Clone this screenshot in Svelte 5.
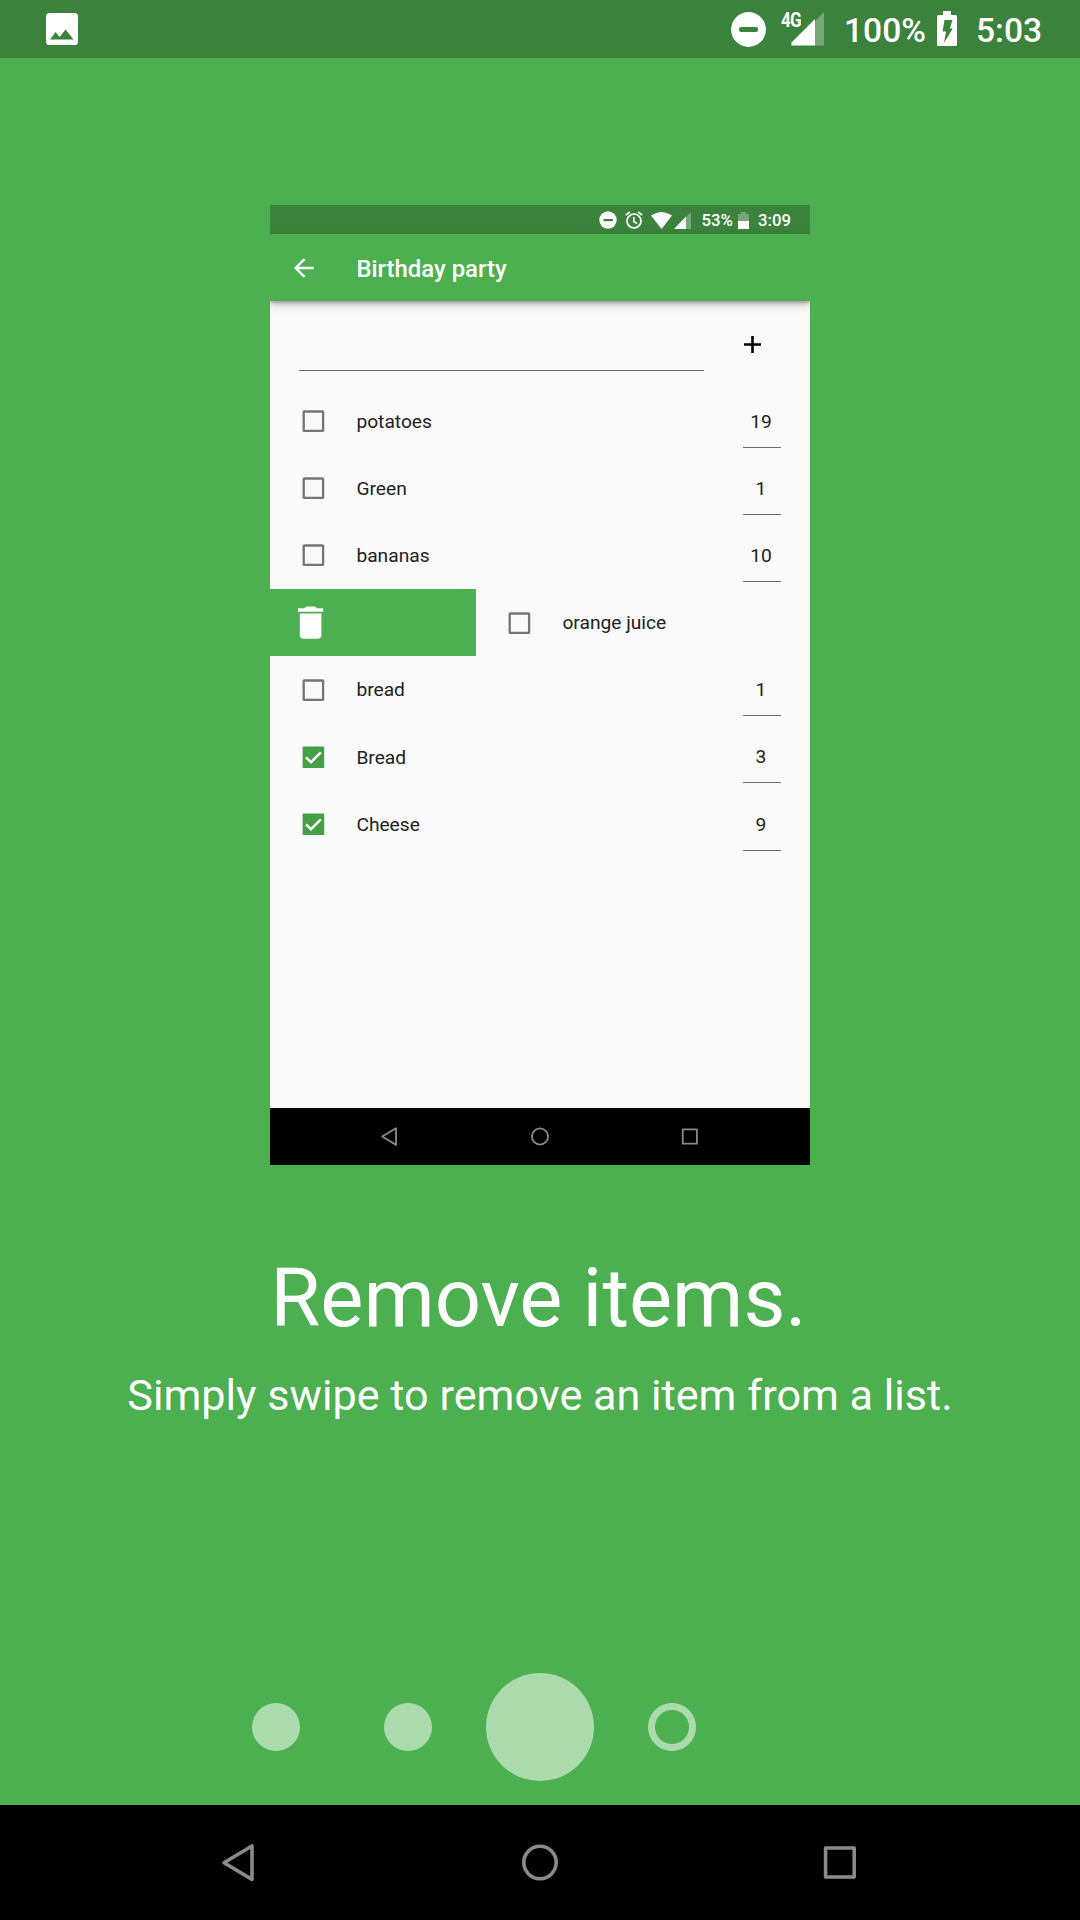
<script>
  const items = [
    { name: 'potatoes', qty: 19 },
    { name: 'Green', qty: 1 },
    { name: 'bananas', qty: 10 },
    { name: 'orange juice', swiped: true },
    { name: 'bread', qty: 1 },
    { name: 'Bread', qty: 3, done: true },
    { name: 'Cheese', qty: 9, done: true }
  ];
</script>

{#snippet checkbox(done)}
  <svg class="check" width="24" height="24" viewBox="-0.4 -0.2 24 24">
    {#if done}
      <rect x="1.2" y="1.2" width="21.6" height="21.6" rx="1" fill="#43a047" />
      <path d="M4.6 12.2l5 4.8 9.8-9.8" fill="none" stroke="#fff" stroke-width="2.4" />
    {:else}
      <rect x="2.3" y="2.3" width="19.4" height="19.4" rx="0.5" fill="none" stroke="#757575" stroke-width="2.3" />
    {/if}
  </svg>
{/snippet}

{#snippet navicons(inset, weight)}
  <svg class="nav" viewBox="0 0 1080 115">
    <g fill="none" stroke="#8a8a8a" stroke-width={weight} stroke-linejoin="round">
      <path d="M252 41v33.4L224 57.7z" transform="translate({-inset} 0)" />
      <circle cx="540" cy="57.5" r="16.2" />
      <rect x="825.6" y="43" width="28.6" height="29" transform="translate({inset} 0)" />
    </g>
  </svg>
{/snippet}

<div class="screen">
  <header class="status">
    <svg class="photo" width="32" height="32" viewBox="0 0 32 32">
      <rect width="32" height="32" rx="3.6" fill="#fff" />
      <path d="M4 26.5L9.6 19l4 5L19.600 16.500 27.500 26.500z" fill="#3b823d" />
    </svg>
    <div class="right">
      <svg class="dnd" width="36" height="36" viewBox="0 0 36 36">
        <circle cx="17.5" cy="18.500" r="17.4" fill="#fff" />
        <rect x="8" y="16" width="19" height="5" rx="2" fill="#3b823d" />
      </svg>
      <div class="net">
        <span class="gen">4G</span>
        <svg width="34" height="34" viewBox="0 0 34 34">
          <path d="M24 9.300L32 1Q33 0.300 33 1.500V32.500q0 1-1 1H24z" fill="#76a877" />
          <path d="M24 7V33.500H0.500V30.500z" fill="#fff" />
        </svg>
      </div>
      <span class="pct">100%</span>
      <svg class="batt" width="20" height="35" viewBox="0 0 20 35">
        <path d="M6 0h8v4h4.500q1.500 0 1.500 1.500V33.500q0 1.500-1.500 1.500h-17Q0 35 0 33.500V5.500Q0 4 1.500 4H6z" fill="#fff" />
        <path d="M7.500 9h8l-2.600 8.600h2.800L7 32l2-11.500H5.600z" fill="#3b823d" />
      </svg>
      <span class="time">5:03</span>
    </div>
  </header>

  <main>
    <section class="phone">
      <div class="ministatus">
        <svg width="18" height="18" viewBox="0 0 18 18">
          <circle cx="9" cy="9" r="8.700" fill="#fff" />
          <rect x="4.500" y="8" width="9.500" height="2.200" fill="#3b823d" />
        </svg>
        <svg class="alarm" width="18" height="18" viewBox="0 0 18 18">
          <g fill="none" stroke="#fff" stroke-width="1.700">
            <circle cx="9" cy="10" r="7" />
            <path d="M8.800 6v4.500l3.200 2M0.800 4.200l4-3.300M17.200 4.200l-4-3.300" />
          </g>
        </svg>
        <svg class="wifi" width="21" height="17" viewBox="0 0 21 17">
          <path d="M0 3.600Q10.500-3.600 21 3.600L10.500 17z" fill="#fff" />
        </svg>
        <svg class="bars" width="17" height="17" viewBox="0 0 17 17">
          <path d="M12 5L17 0V17H12z" fill="#76a877" />
          <path d="M12 4.500V17H0z" fill="#fff" />
        </svg>
        <span class="minipct">53%</span>
        <svg class="minibatt" width="11" height="17" viewBox="0 0 11 17">
          <path d="M3 0h5v2h3v7H0V2h3z" fill="#76a877" />
          <path d="M0 9h11v8H0z" fill="#fff" />
        </svg>
        <span class="minitime">3:09</span>
      </div>
      <div class="appbar">
        <svg width="20" height="20" viewBox="0 0 20 20">
          <path d="M10.500 1L1.700 10l8.800 9M1.700 10H19.700" fill="none" stroke="#fff" stroke-width="2.500" />
        </svg>
        <h2>Birthday party</h2>
      </div>
      <div class="content">
        <div class="entry">
          <div class="field"></div>
          <svg width="17" height="17" viewBox="0 0 17 17">
            <path d="M8.500 0v17M0 8.500h17" stroke="#000" stroke-width="2.600" />
          </svg>
        </div>
        {#each items as item}
          <div class="row">
            {#if item.swiped}
              <div class="swipe">
                <svg width="43.200" height="43.200" viewBox="0 0 24 24">
                  <path d="M6 19c0 1.100.9 2 2 2h8c1.100 0 2-.9 2-2V7H6v12zM19 4h-3.500l-1-1h-5l-1 1H5v2h14V4z" fill="#fff" />
                </svg>
              </div>
            {/if}
            {@render checkbox(item.done)}
            <span class="name">{item.name}</span>
            {#if item.qty}
              <span class="qty">{item.qty}</span>
            {/if}
          </div>
        {/each}
      </div>
      <div class="mininav">{@render navicons(2.4, 3.6)}</div>
    </section>

    <h1>Remove items.</h1>
    <p>Simply swipe to remove an item from a list.</p>

    <div class="dots">
      <i class="dot"></i>
      <i class="dot"></i>
      <i class="dot big"></i>
      <i class="dot ring"></i>
      <i class="dot off"></i>
    </div>
  </main>

  <footer>{@render navicons(0, 3.6)}</footer>
</div>

<style>
  :global(body) { margin: 0; background: #4caf50; }
  svg { display: block; flex: none; }
  .screen {
    width: 1080px; height: 1920px; overflow: hidden;
    display: flex; flex-direction: column;
    background: #4caf50; color: #fff;
    font-family: Roboto, sans-serif;
  }
  .status {
    height: 58px; flex: none; box-sizing: border-box;
    padding: 0 0 0 46px;
    display: flex; align-items: center; justify-content: space-between;
    background: #3b823d;
  }
  .right { display: flex; height: 58px; align-items: center; width: 349px; font-size: 33.6px; font-weight: 500; }
  .net { width: 44px; height: 34px; margin-left: 14px; display: flex; }
  .net svg { margin-left: -11px; }
  .gen { width: 21px; font-size: 20.500px; line-height: 16px; letter-spacing: -1px; font-weight: 700; transform: scaleX(.83); transform-origin: left; height: 16px; }
  .pct { width: 93px; margin-left: 19px; line-height: 58px; padding-top: 3px; }
  .batt { margin-top: -1px; }
  .time { margin-left: 19px; padding-top: 2px; }

  main { flex: 1; display: flex; flex-direction: column; align-items: center; padding-top: 147px; }
  .phone { width: 540px; height: 960px; flex: none; display: flex; flex-direction: column; background: #fafafa; overflow: hidden; }
  .ministatus {
    height: 29px; flex: none; background: #3b823d; box-sizing: border-box;
    display: flex; align-items: center; padding-left: 328.600px; padding-top: 1px;
    font-size: 16.800px; font-weight: 500; line-height: 28px;
  }
  .alarm { margin-left: 8.400px; }
  .wifi { margin-left: 8px; }
  .bars { margin-left: 2px; }
  .minipct { width: 37px; margin-left: 10.500px; }
  .minibatt { margin-left: 0; }
  .minitime { margin-left: 8.500px; }
  .appbar {
    height: 67px; flex: none; display: flex; align-items: center; box-sizing: border-box;
    padding-left: 24px; background: #4caf50; position: relative;
    box-shadow: 0 2px 4px rgba(0,0,0,.3), 0 4px 9px rgba(0,0,0,.16);
  }
  h2 { margin: 2px 0 0 42.400px; font-size: 23.900px; font-weight: 500; line-height: 28px; }
  .content { flex: 1; color: #212121; }
  .entry { height: 86.500px; display: flex; padding-left: 29px; align-items: flex-start; }
  .field { width: 405px; height: 69px; border-bottom: 1px solid #6c6c6c; }
  .entry svg { margin: 35px 0 0 40px; }
  .row { height: 67.200px; display: flex; align-items: center; font-size: 19.200px; }
  .swipe { width: 206px; height: 100%; background: #4caf50; flex: none; display: flex; align-items: center; }
  .swipe svg { margin-left: 19.400px; }
  .check { margin-left: 31px; }
  .name { margin-left: 31.400px; flex: 1; white-space: nowrap; }
  .qty {
    width: 38px; margin-right: 29px; text-align: center; box-sizing: border-box; padding-right: 2px;
    height: 60px; line-height: 67px; align-self: flex-start; border-bottom: 1px solid #6c6c6c;
  }
  .mininav { height: 57px; flex: none; background: #000; }
  .nav { width: 100%; height: 100%; }

  h1 { margin: 86px 3px 0 0; font-size: 81.300px; font-weight: 400; line-height: 96px; white-space: nowrap; }
  p { margin: 23px 0 0; font-size: 43.200px; line-height: 52px; white-space: nowrap; }
  .dots { display: grid; grid-template-columns: repeat(5, 132px); place-items: center; height: 108px; margin-top: auto; margin-bottom: 24px; }
  .dot { width: 48px; height: 48px; border-radius: 50%; background: #abdaad; box-sizing: border-box; }
  .big { width: 108px; height: 108px; }
  .ring { background: none; border: 7px solid #abdaad; }
  .off { visibility: hidden; }
  footer { height: 115px; flex: none; background: #000; }
</style>
